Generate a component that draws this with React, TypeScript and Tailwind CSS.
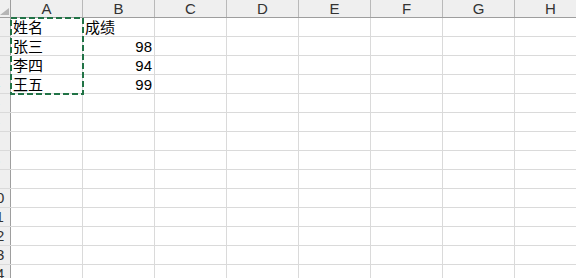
import React from 'react'

const cols = ['A', 'B', 'C', 'D', 'E', 'F', 'G', 'H']
const data: Record<number, string[]> = {
  1: ['姓名', '成绩'],
  2: ['张三', '98'],
  3: ['李四', '94'],
  4: ['王五', '99'],
}

const font = "font-['Liberation_Sans','Noto_Sans_CJK_SC',sans-serif]"

export default function App() {
  const rows = Array.from({ length: 14 }, (_, i) => i + 1)

  return (
    <div className={`relative w-[576px] h-[278px] overflow-hidden bg-white ${font}`}>
      <div className="flex h-[18px] bg-[#efefef] border-b border-[#9e9e9e]">
        <div className="relative w-[11px] shrink-0 border-r border-[#9e9e9e]">
          <svg className="absolute left-0 top-[8px]" width="9" height="8" viewBox="0 0 9 8">
            <polygon points="9,0 9,7 0,7" fill="#b5b5b5" />
          </svg>
        </div>
        {cols.map((c) => (
          <div
            key={c}
            className="w-[72px] shrink-0 border-r border-[#b9b9b9] flex items-center justify-center text-[15px] leading-none text-[#333]"
          >
            {c}
          </div>
        ))}
      </div>

      {rows.map((r) => (
        <div key={r} className="flex h-[19px] border-b border-[#dadada]">
          {/* row header is cut at the window edge, only the last digit shows */}
          <div className="w-[11px] shrink-0 overflow-hidden bg-[#efefef] border-r border-[#9e9e9e]">
            <div className="w-[30px] ml-[-19px] text-center text-[15px] leading-[18px] text-[#333]">
              {r}
            </div>
          </div>
          {cols.map((c, ci) => {
            const v = data[r]?.[ci] ?? ''
            const num = /^\d+$/.test(v)
            return (
              <div
                key={c}
                className={`w-[72px] shrink-0 border-r border-[#dadada] flex items-center text-[15px] leading-none text-black ${
                  num ? 'justify-end pr-[2px]' : 'pl-[2px]'
                }`}
              >
                {v}
              </div>
            )
          })}
        </div>
      ))}

      <svg className="absolute left-[10px] top-[17px]" width="74" height="78" viewBox="0 0 74 78">
        <rect
          x="1"
          y="1"
          width="72"
          height="76"
          fill="none"
          stroke="#217346"
          strokeWidth="2"
          strokeDasharray="6 3"
        />
      </svg>
    </div>
  )
}
